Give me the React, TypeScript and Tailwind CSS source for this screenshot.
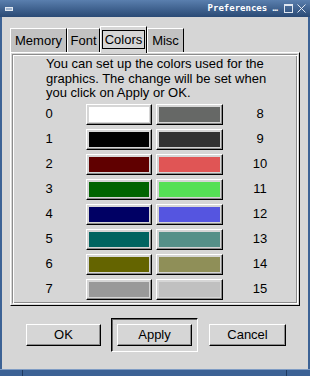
const ROWS: [string, string][] = [
  ["#ffffff", "#666866"],
  ["#000000", "#333333"],
  ["#600000", "#e05555"],
  ["#006400", "#55e055"],
  ["#000064", "#5555e0"],
  ["#006460", "#559088"],
  ["#646400", "#8f8f58"],
  ["#999999", "#c0c0c0"],
];

const TABS = [
  { label: "Memory", w: "w-[57px]" },
  { label: "Font", w: "w-[33px]" },
  { label: "Colors", w: "w-[47px]", active: true },
  { label: "Misc", w: "w-[37px]" },
];

function Swatch({ color, wide }: { color: string; wide?: boolean }) {
  return (
    <div
      className={`${wide ? "w-[67px]" : "w-[66px]"} h-[21px] border border-t-white border-l-white border-r-black border-b-black bg-[#d6d6d6] p-[2px] shadow-[inset_-1px_-1px_0_#8c8c8c]`}
    >
      <div className="h-full w-full" style={{ backgroundColor: color }} />
    </div>
  );
}

function Button({ label, w }: { label: string; w: string }) {
  return (
    <div
      className={`${w} h-[22px] flex items-center justify-center border border-t-white border-l-white border-r-black border-b-black shadow-[inset_-1px_-1px_0_#8c8c8c]`}
    >
      {label}
    </div>
  );
}

export default function App() {
  return (
    <div className="w-[310px] h-[376px] flex flex-col overflow-hidden bg-[#3c6295] font-['Liberation_Sans',Arial,sans-serif] text-[13px] text-black">
      {/* title bar */}
      <div className="h-[17px] flex items-center bg-gradient-to-b from-[#5a7fae] to-[#2a4a75] pl-[5px] pr-[4px]">
        <div className="w-[8px] h-[4px] border border-[#e2e9f2] bg-[#9fb4cf]" />
        <div className="flex-1" />
        <span className="font-['DejaVu_Sans_Mono',monospace] font-bold text-[9px] text-white leading-none mr-[6px]">
          Preferences …
        </span>
        <div className="w-[9px] h-[9px] border border-t-2 border-[#dfe6f0] mr-[4px]" />
        <svg width="9" height="9" viewBox="0 0 9 9" className="text-[#dfe6f0]">
          <path d="M0.5 0.5 L8.5 8.5 M8.5 0.5 L0.5 8.5" stroke="currentColor" strokeWidth="1" />
        </svg>
      </div>

      <div className="flex-1 min-h-0 flex px-[2px]">
        <div className="flex-1 flex flex-col bg-[#d6d6d6] pt-[9px] px-[8px]">
          {/* tabs */}
          <div className="h-[26px] flex items-end relative z-10">
            {TABS.map((t) =>
              t.active ? (
                <div
                  key={t.label}
                  className={`${t.w} h-[27px] -mb-[1px] flex items-center justify-center bg-[#d6d6d6] border-t border-l border-r border-t-white border-l-white border-r-black pb-[1px]`}
                >
                  <span className="border border-black px-[2px] py-[1px] leading-[15px]">{t.label}</span>
                </div>
              ) : (
                <div
                  key={t.label}
                  className={`${t.w} h-[24px] flex items-center justify-center bg-[#c2c2c2] border-t border-l border-r border-t-white border-l-white border-r-black pt-[1px]`}
                >
                  {t.label}
                </div>
              )
            )}
          </div>

          {/* panel */}
          <div className="h-[254px] border border-t-white border-l-white border-r-black border-b-black p-[1px]">
            <div className="h-full border border-t-[#8c8c8c] border-l-[#8c8c8c] border-r-white border-b-white shadow-[inset_1px_1px_0_#fff,inset_-1px_-1px_0_#8c8c8c] pt-[2px]">
              <p className="pl-[33px] leading-[14.5px] whitespace-nowrap">
                You can set up the colors used for the
                <br />
                graphics. The change will be set when
                <br />
                you click on Apply or OK.
              </p>
              <div className="mt-[3px] flex flex-col gap-[4px] pl-[11px]">
                {ROWS.map(([a, b], i) => (
                  <div key={i} className="flex items-center h-[21px]">
                    <span className="w-[50px] text-center">{i}</span>
                    <div className="ml-[12px] flex gap-[4px]">
                      <Swatch color={a} />
                      <Swatch color={b} wide />
                    </div>
                    <span className="w-[74px] text-center">{i + 8}</span>
                  </div>
                ))}
              </div>
            </div>
          </div>

          {/* buttons */}
          <div className="mt-[12px] flex items-center pl-[16px]">
            <Button label="OK" w="w-[75px]" />
            <div className="ml-[10px] border border-t-black border-l-black border-r-white border-b-white shadow-[inset_1px_1px_0_#666] p-[5px]">
              <Button label="Apply" w="w-[75px]" />
            </div>
            <div className="ml-[11px]">
              <Button label="Cancel" w="w-[77px]" />
            </div>
          </div>
        </div>
      </div>

      {/* bottom frame */}
      <div className="h-[7px] flex border-t border-[#7f9cc4] bg-[#3c6295]">
        <div className="w-[23px] border-r border-[#1f3a60]" />
        <div className="flex-1 border-r border-[#1f3a60]" />
        <div className="w-[23px]" />
      </div>
    </div>
  );
}
